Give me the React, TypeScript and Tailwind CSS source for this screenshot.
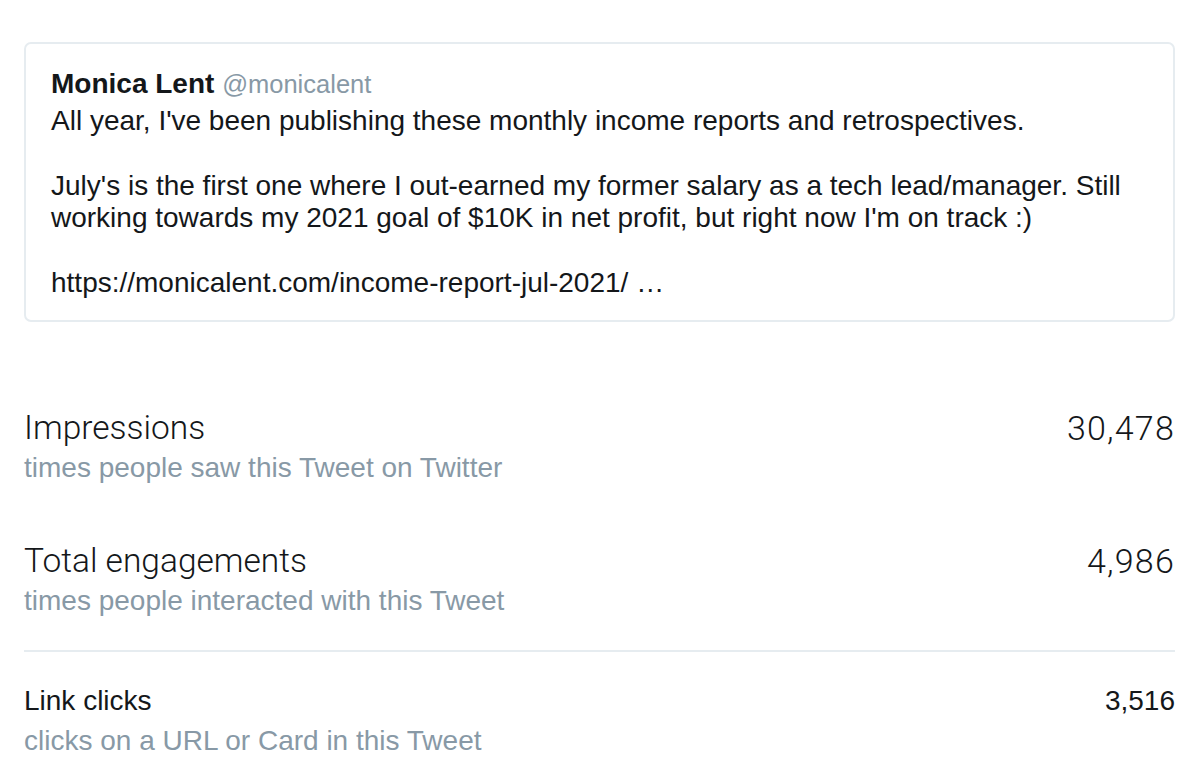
const stats = [
  { label: 'Impressions', sub: 'times people saw this Tweet on Twitter', value: '30,478' },
  { label: 'Total engagements', sub: 'times people interacted with this Tweet', value: '4,986' },
];

const StatRow = ({ label, sub, value }: { label: string; sub: string; value: string }) => (
  <div className="flex justify-between items-start">
    <div>
      <div className="text-[33.5px] leading-[40px] font-light text-[#14171a] [font-family:Roboto,'Liberation_Sans',sans-serif]">{label}</div>
      <div className="text-[28px] leading-[32px] text-[#8899a6] mt-[4px]">{sub}</div>
    </div>
    <div className="text-[34px] leading-[40px] font-light tracking-[1.2px] text-[#14171a] [font-family:Roboto,'Liberation_Sans',sans-serif]">{value}</div>
  </div>
);

export default function App() {
  return (
    <div className="min-h-screen bg-white pt-[42px] pl-[24px] pr-[23px] [font-family:'Liberation_Sans',Arial,sans-serif] text-[#14171a]">
      <div className="border-2 border-[#e6ecf0] rounded-[7px] px-[25px] pt-[24px] pb-[20px] text-[28px] leading-[32.5px]">
        <div className="mb-[4px]">
          <span className="font-bold">Monica Lent</span>{' '}
          <span className="text-[25.5px] text-[#8899a6]">@monicalent</span>
        </div>
        <p>All year, I've been publishing these monthly income reports and retrospectives.</p>
        <p className="h-[32.5px]" />
        <p>July's is the first one where I out-earned my former salary as a tech lead/manager. Still</p>
        <p>working towards my 2021 goal of $10K in net profit, but right now I'm on track :)</p>
        <p className="h-[32.5px]" />
        <p>https://monicalent.com/income-report-jul-2021/ …</p>
      </div>

      <div className="mt-[86px] flex flex-col gap-[57px]">
        {stats.map((s) => (
          <StatRow key={s.label} {...s} />
        ))}
      </div>

      <div className="mt-[33px] border-t-2 border-[#e6ecf0]" />

      <div className="mt-[29px] flex justify-between items-start text-[28px] leading-[40px]">
        <div>
          <div>Link clicks</div>
          <div className="text-[#8899a6]">clicks on a URL or Card in this Tweet</div>
        </div>
        <div>3,516</div>
      </div>
    </div>
  );
}
